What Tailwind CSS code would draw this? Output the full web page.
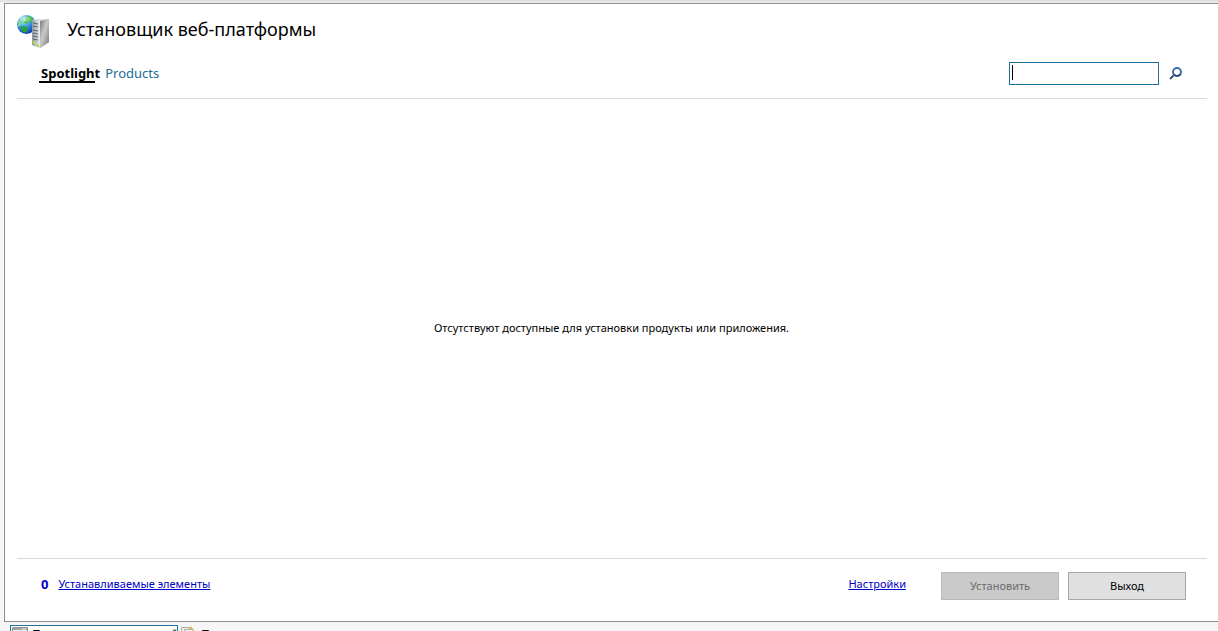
<!DOCTYPE html>
<html lang="ru">
<head>
<meta charset="utf-8">
<title>Установщик веб-платформы</title>
<script src="https://cdn.jsdelivr.net/npm/@tailwindcss/browser@4"></script>
</head>
<body class="flex h-screen flex-col overflow-hidden bg-[#f6f6f6] font-['Noto_Sans','Open_Sans',sans-serif] text-[11px] text-black">
<div class="h-[3px] shrink-0 border-b border-[#f0f0f0] bg-[#e1e1e1]"></div>
<main class="ml-1 flex min-h-0 flex-1 flex-col border-y border-l border-[#8e8e8e] bg-white">
  <header class="mr-[11px] ml-3 flex h-[95px] shrink-0 flex-col border-b border-[#d9d9d9]">
    <div class="flex h-[52px] items-center gap-[17px]">
      <svg class="mt-1 h-[34px] w-[33px] shrink-0" viewBox="0 0 33 34" aria-hidden="true">
        <defs>
          <radialGradient id="sea" cx=".35" cy=".25" r=".8"><stop offset="0" stop-color="#b8ecff"/><stop offset=".45" stop-color="#3f9fea"/><stop offset="1" stop-color="#0d37a8"/></radialGradient>
          <linearGradient id="side" x1="0" x2="1" y1="0" y2="1"><stop offset="0" stop-color="#777"/><stop offset=".45" stop-color="#c9c9c9"/><stop offset="1" stop-color="#777"/></linearGradient>
          <linearGradient id="face"><stop offset="0" stop-color="#8e989e"/><stop offset="1" stop-color="#edf0f1"/></linearGradient>
        </defs>
        <circle cx="9.500" cy="9.500" r="9.500" fill="url(#sea)"/>
        <path d="M10 1c4 0 6 2 7 5l-3 1-2-1-2 3-3-1 1-3Z" fill="#4cc24a"/>
        <path d="M1 6l4-3 2 1-1 4-3 3-2 1Z" fill="#7ed3a0"/>
        <path d="m3 12 4-1 4 2-1 4-4 0Z" fill="#2aa23b"/>
        <ellipse cx="8" cy="4" rx="5" ry="2.500" fill="#fff" fill-opacity=".35"/>
        <path d="M16 6l7-2 9 0v23l-9 6-7-3Z" fill="#858585"/>
        <path d="m23 5 9-1v23l-9 6Z" fill="url(#side)"/>
        <path d="m15 5 8 0v28l-8-3Z" fill="url(#face)"/>
        <path d="m15 5 6-1 11 0-9 2Z" fill="#dce0e1"/>
        <path d="m16 8 5 1m-5 2 5 1m-5 3 5 1m-5 2 5 1m-5 2 5 1m-5 2 5 1" stroke="#57636b" stroke-width="1"/>
        <path d="m16 27 2 1m2 2 2 1" stroke="#bddd20" stroke-width="2"/>
      </svg>
      <h1 class="-mt-[2px] text-lg leading-6">Установщик веб-платформы</h1>
    </div>
    <div class="flex flex-1 items-start justify-between pr-[24px] pl-[22px]">
      <nav class="flex gap-[5px] pt-2 text-[13px] leading-[18px]">
        <a href="#spotlight" class="relative pl-[2px] font-bold">Spotlight<span class="absolute top-[17px] left-0 h-[2px] w-14 bg-black"></span></a>
        <a href="#products" class="text-[#246b94]">Products</a>
      </nav>
      <form class="flex items-center gap-[10px] pt-[6px]">
        <div class="relative">
          <input type="text" aria-label="Поиск" class="block h-[23px] w-[150px] border border-[#1f7199] bg-white px-1 outline-none">
          <span class="absolute top-[3px] left-[3px] h-[15px] w-px bg-black"></span>
        </div>
        <button type="button" aria-label="Найти" class="h-[14px] w-[14px]">
          <svg class="h-[14px] w-[14px]" viewBox="0 0 14 14" fill="none" aria-hidden="true">
            <path d="m1 12 4-4" stroke="#35587f" stroke-width="2"/>
            <circle cx="8" cy="5" r="4" stroke="#3970ae" stroke-width="2"/>
            <path d="M5 7.6A4 4 0 0 0 11.5 7" stroke="#304b6d" stroke-width="1.6"/>
          </svg>
        </button>
      </form>
    </div>
  </header>
  <section class="flex flex-1 items-center justify-center">
    <p>Отсутствуют доступные для установки продукты или приложения.</p>
  </section>
  <footer class="mr-[11px] ml-3 flex h-[63px] shrink-0 items-start border-t border-[#d9d9d9] pt-[13px] pr-[21px] pl-6">
    <div class="flex flex-1 items-center gap-[10px] pt-1 text-[#0000c8]">
      <span class="text-[13px] leading-4 font-bold">0</span>
      <a href="#items" class="leading-4 underline">Устанавливаемые элементы</a>
    </div>
    <a href="#settings" class="mt-1 mr-[35px] leading-4 text-[#0000c8] underline">Настройки</a>
    <div class="flex gap-[9px]">
      <button type="button" disabled class="h-7 w-[118px] border border-[#b9b9b9] bg-[#cacaca] text-[#6c6c6c]">Установить</button>
      <button type="button" class="h-7 w-[118px] border border-[#a8a8a8] bg-[#e0e0e0]">Выход</button>
    </div>
  </footer>
</main>
<div class="flex h-[9px] shrink-0 items-start overflow-hidden pt-[3px] pl-[10px] text-xs">
  <button type="button" class="flex h-6 w-[168px] shrink-0 items-start justify-start gap-1 border border-[#1f7199] bg-white pl-px">
    <svg class="mt-px h-4 w-4 shrink-0" viewBox="0 0 16 16" aria-hidden="true"><path d="M.5.5h15v15H.5Z" fill="#eee" stroke="#929292"/><path d="M1 2h14" stroke="#a0a69c" stroke-width="2"/><path d="M10 2h4" stroke="#eee"/><path d="M3 6h4v3H3Zm6 0h4v3H9Z" fill="#8ba4b7"/></svg>
    <span class="leading-[18px] whitespace-nowrap">Просмотр возможностей</span>
  </button>
  <button type="button" class="flex h-6 shrink-0 items-start gap-1 pt-px pl-[3px]">
    <svg class="h-4 w-4 shrink-0" viewBox="0 0 16 16" aria-hidden="true"><path d="M.5 1.5h8v12h-8Z" fill="#eee" stroke="#aaa"/><path d="M3.5 3.5h8l2 2v10h-10Z" fill="#fafafa" stroke="#aaa"/><path d="m9 1 3 3" stroke="#e6b84c" stroke-width="2"/></svg>
    <span class="leading-[18px]">Просмотр содержимого</span>
  </button>
</div>
</body>
</html>
